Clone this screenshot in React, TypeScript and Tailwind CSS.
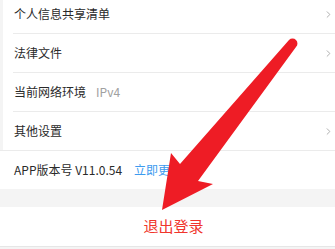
import { ChevronRight } from "lucide-react";

const font = { fontFamily: '"Noto Sans CJK SC", "Noto Sans", sans-serif' };

function Row({ label, extra, chevron }: { label: string; extra?: React.ReactNode; chevron?: boolean }) {
  return (
    <div className="h-[39px] flex items-center pl-[1px] pr-[1px] border-b border-[#ebebeb]">
      <span className="text-[12px] text-[#2a2a2a]">{label}</span>
      {extra}
      {chevron && <ChevronRight className="ml-auto w-[11px] h-[11px] text-[#a8a8a8]" strokeWidth={2} />}
    </div>
  );
}

export default function App() {
  return (
    <div className="relative w-[335px] h-[249px] overflow-hidden bg-[#f4f4f4]" style={font}>
      <div className="-mt-[5px]">
        <div className="ml-[3px] bg-white pl-[10px]">
          <Row label="个人信息共享清单" chevron />
          <Row label="法律文件" chevron />
          <Row label="当前网络环境" extra={<span className="ml-[10px] text-[12px] text-[#a0a0a0]">IPv4</span>} />
        </div>
        <div className="border-b border-[#ebebeb]">
          <div className="ml-[3px] bg-white h-[38px] flex items-center pl-[11px] pr-[1px]">
            <span className="text-[12px] text-[#2a2a2a]">其他设置</span>
            <ChevronRight className="ml-auto w-[11px] h-[11px] text-[#a8a8a8]" strokeWidth={2} />
          </div>
        </div>
        <div className="bg-white h-[38px] flex items-center pl-[14px]">
          <span className="text-[12px] text-[#2a2a2a]">APP版本号 V11.0.54</span>
          <span className="ml-[12px] text-[12px] text-[#3d9bef]">立即更新</span>
        </div>
        <div className="h-[18px]" />
        <div className="bg-white h-[40px] border-b border-[#e6e6e6] flex items-center justify-center pl-[12px]">
          <span className="text-[15px] text-[#f0352c]">退出登录</span>
        </div>
      </div>
      <svg className="absolute left-0 top-0" width="335" height="249" viewBox="0 0 335 249">
        <path
          d="M289 40 L180 164 L171 153 L162 210 L213 184 L198 181 L296 47 A4.5 4.5 0 0 0 289 40 Z"
          fill="#ee1c25"
        />
      </svg>
    </div>
  );
}
